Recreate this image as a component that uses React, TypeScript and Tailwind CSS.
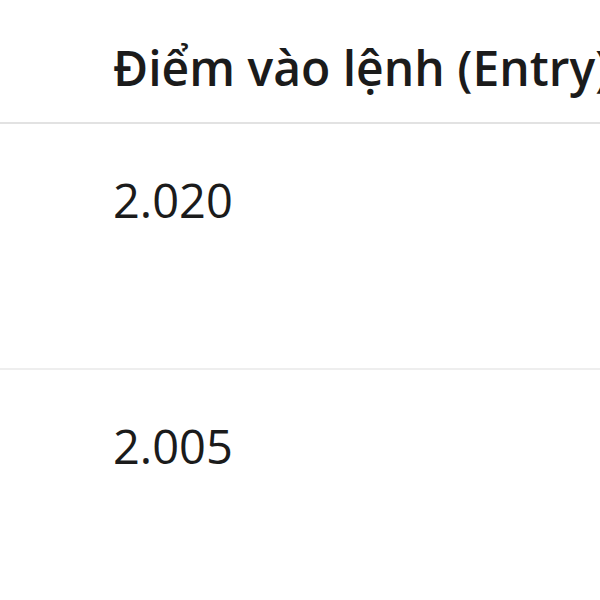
export default function App() {
  const rows = ['2.020', '2.005'];

  return (
    <div className="w-[600px] h-[600px] overflow-hidden bg-white text-[#1b1b1b] font-['Open_Sans',sans-serif]">
      {/* Header */}
      <div className="pl-[113px] pt-[38px] pb-[24px] border-b-2 border-[#e2e2e2] whitespace-nowrap">
        <span className="text-[48px] leading-[60px] font-semibold">Điểm vào lệnh (Entry)</span>
      </div>

      {/* Rows */}
      {rows.map((value, i) => (
        <div
          key={value}
          className={`pl-[113px] pt-[46px] h-[246px] ${i === 0 ? 'border-b-2 border-[#eeeeee]' : ''}`}
        >
          <span className="text-[47px] leading-[60px] font-normal">{value}</span>
        </div>
      ))}
    </div>
  );
}
